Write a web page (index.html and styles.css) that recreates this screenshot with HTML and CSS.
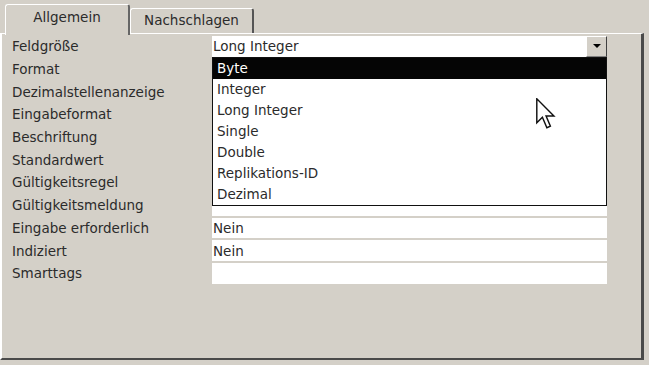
FILE: index.html
```html
<!DOCTYPE html>
<html lang="de">
<head>
  <meta charset="UTF-8">
  <title>Feldeigenschaften</title>
  <link rel="stylesheet" href="styles.css">
</head>
<body>
  <div class="dialog">
    <div class="tabs">
      <div class="tab active">Allgemein</div>
      <div class="tab">Nachschlagen</div>
    </div>
    <div class="panel">
      <div class="props">
        <div class="label">Feldgröße</div>
        <div class="value combo">
          <span class="combo-text">Long Integer</span>
          <span class="combo-btn"><span class="arrow"></span></span>
        </div>
        <div class="label">Format</div><div class="value"></div>
        <div class="label">Dezimalstellenanzeige</div><div class="value"></div>
        <div class="label">Eingabeformat</div><div class="value"></div>
        <div class="label">Beschriftung</div><div class="value"></div>
        <div class="label">Standardwert</div><div class="value"></div>
        <div class="label">Gültigkeitsregel</div><div class="value"></div>
        <div class="label">Gültigkeitsmeldung</div><div class="value"></div>
        <div class="label">Eingabe erforderlich</div><div class="value">Nein</div>
        <div class="label">Indiziert</div><div class="value">Nein</div>
        <div class="label">Smarttags</div><div class="value"></div>
      </div>

      <ul class="dropdown">
        <li class="selected">Byte</li>
        <li>Integer</li>
        <li>Long Integer</li>
        <li>Single</li>
        <li>Double</li>
        <li>Replikations-ID</li>
        <li>Dezimal</li>
      </ul>

      <svg class="cursor" width="20" height="32" viewBox="0 0 12.5 20">
        <path d="M0.5 0.5 L0.5 15.5 L4 12 L6.8 18.6 L9 17.6 L6.3 11.2 L11.2 11.2 Z" fill="#fff" stroke="#111" stroke-width="0.9" stroke-linejoin="miter"/>
      </svg>
    </div>
  </div>
</body>
</html>
```

FILE: styles.css
```css
body {
  margin: 0;
  background-color: #d4d0c8;
  font-family: "DejaVu Sans", Verdana, sans-serif;
  font-size: 13.5px;
  color: #2b2b2b;
}
.dialog {
  width: 649px;
  height: 365px;
  background-color: #d4d0c8;
}
.tabs {
  display: flex;
  align-items: flex-end;
  height: 33px;
  padding-left: 5px;
}
.tab {
  box-sizing: border-box;
  width: 124px;
  height: 25px;
  padding-top: 3px;
  text-align: center;
  border-top: 1px solid #fff;
  border-left: 1px solid #fff;
  border-right: 2px solid #555;
  border-radius: 3px 3px 0 0;
}
.tab.active {
  position: relative;
  z-index: 1;
  width: 125px;
  height: 31px;
  margin-bottom: -2px;
  padding-top: 4px;
  background-color: #d4d0c8;
  border-right: 2px solid #666;
}
.panel {
  position: relative;
  box-sizing: border-box;
  width: 644px;
  height: 327px;
  border-top: 1px solid #fff;
  border-left: 2px solid #fff;
  border-right: 3px solid #4a4a4a;
  border-bottom: 2px solid #4a4a4a;
}
.props {
  display: grid;
  grid-template-columns: 200px 395px;
  grid-auto-rows: 20.7px;
  row-gap: 2px;
  padding: 2px 0 0 10px;
}
.label {
  display: flex;
  align-items: center;
  white-space: nowrap;
}
.value {
  display: flex;
  align-items: center;
  background-color: #fff;
  padding-left: 1px;
}
.combo {
  justify-content: space-between;
  padding-right: 0;
}
.combo-btn {
  display: flex;
  align-items: center;
  justify-content: center;
  box-sizing: border-box;
  width: 21px;
  height: 100%;
  background-color: #d4d0c8;
  border-top: 1px solid #fff;
  border-left: 1px solid #fff;
  border-right: 1px solid #404040;
  border-bottom: 1px solid #808080;
}
.arrow {
  width: 0;
  height: 0;
  border-left: 4px solid transparent;
  border-right: 4px solid transparent;
  border-top: 4px solid #000;
}
.dropdown {
  position: absolute;
  left: 210px;
  top: 23px;
  width: 393px;
  margin: 0;
  padding: 0;
  list-style: none;
  background-color: #fff;
  border: 1px solid #111;
}
.dropdown li {
  height: 21px;
  line-height: 21px;
  padding-left: 4px;
}
.dropdown li.selected {
  background-color: #050505;
  color: #fff;
}
.cursor {
  position: absolute;
  left: 534px;
  top: 64px;
}
```
